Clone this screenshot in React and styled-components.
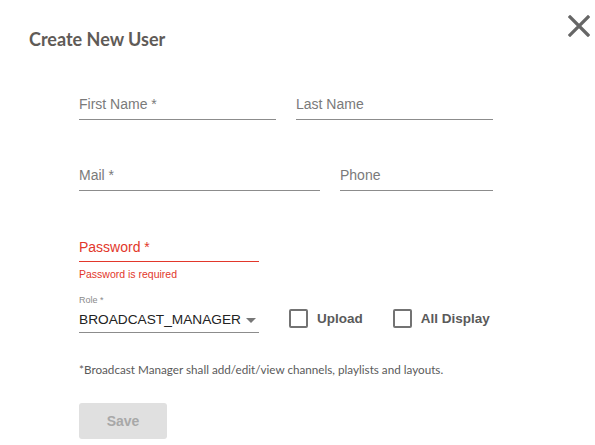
import React, { useState } from "react";
import styled, { createGlobalStyle } from "styled-components";

const GlobalStyle = createGlobalStyle`
  body {
    margin: 0;
    background: #ffffff;
    font-family: "Liberation Sans", Arial, sans-serif;
  }
`;

const Dialog = styled.div`
  width: 595px;
  height: 445px;
  box-sizing: border-box;
  position: relative;
  background: #ffffff;
`;

const Header = styled.div`
  display: flex;
  justify-content: space-between;
  align-items: flex-start;
  padding: 15px 5px 0 29px;
`;

const Title = styled.h2`
  margin: 13px 0 0;
  font-family: "Lato", "Open Sans", sans-serif;
  font-weight: 700;
  font-size: 18px;
  line-height: 22px;
  color: #5f5b57;
`;

const CloseButton = styled.button`
  width: 22px;
  height: 22px;
  padding: 0;
  border: none;
  background: none;
  cursor: pointer;
  display: flex;
`;

const Form = styled.form`
  width: 414px;
  padding: 45px 0 0 79px;
  display: flex;
  flex-direction: column;
`;

const Row = styled.div`
  display: flex;
  gap: 20px;
  align-items: flex-end;
  margin-top: ${(p) => p.$top || 0}px;
`;

const Field = styled.div`
  width: ${(p) => p.$width}px;
  box-sizing: border-box;
  padding-bottom: ${(p) => (p.$error ? 5 : 6)}px;
  border-bottom: 1px solid ${(p) => (p.$error ? "#e2372b" : "#8c8c8c")};
`;

const Input = styled.input`
  width: 100%;
  border: none;
  outline: none;
  padding: 0;
  background: transparent;
  font-family: "Liberation Sans", Arial, sans-serif;
  font-size: 14px;
  line-height: 16px;
  height: 16px;
  color: #333;

  &::placeholder {
    color: ${(p) => (p.$error ? "#e2372b" : "#7a7a7a")};
    opacity: 1;
  }
`;

const ErrorText = styled.div`
  margin-top: 6px;
  font-size: 10.5px;
  line-height: 12px;
  color: #e2372b;
`;

const RoleRow = styled.div`
  display: flex;
  align-items: flex-end;
  margin-top: 15px;
`;

const SelectWrap = styled.div`
  width: 180px;
  display: flex;
  flex-direction: column;
`;

const SmallLabel = styled.label`
  font-size: 9px;
  line-height: 11px;
  color: #8a8a8a;
`;

const Select = styled.div`
  margin-top: 6px;
  display: flex;
  align-items: center;
  justify-content: space-between;
  padding: 0 3px 4px 0;
  border-bottom: 1px solid #8c8c8c;
  font-size: 13.7px;
  line-height: 16px;
  color: #222;
  cursor: pointer;
`;

const Caret = styled.span`
  width: 0;
  height: 0;
  border-left: 5px solid transparent;
  border-right: 5px solid transparent;
  border-top: 5px solid #777;
`;

const Check = styled.label`
  display: flex;
  align-items: center;
  gap: 9px;
  margin-left: ${(p) => p.$left}px;
  margin-bottom: 5px;
  font-size: 13.5px;
  font-weight: 700;
  color: #5a5a5a;
  cursor: pointer;
`;

const Box = styled.span`
  width: 19px;
  height: 19px;
  box-sizing: border-box;
  border: 2px solid #737373;
  border-radius: 2px;
  background: ${(p) => (p.$on ? "#737373" : "#fff")};
`;

const Note = styled.p`
  margin: 29px 0 0;
  font-family: "Lato", "Open Sans", sans-serif;
  font-size: 11.7px;
  line-height: 14px;
  color: #5a5a5a;
`;

const SaveButton = styled.button`
  margin-top: 27px;
  width: 88px;
  height: 36px;
  border: none;
  border-radius: 3px;
  background: #e0e0e0;
  color: #a8a8a8;
  font-family: "Liberation Sans", Arial, sans-serif;
  font-size: 14px;
  font-weight: 700;
`;

const App = () => {
  const [upload, setUpload] = useState(false);
  const [allDisplay, setAllDisplay] = useState(false);

  return (
    <Dialog>
      <GlobalStyle />
      <Header>
        <Title>Create New User</Title>
        <CloseButton aria-label="close">
          <svg width="22" height="22" viewBox="0 0 22 22">
            <path
              d="M2 2 L20 20 M20 2 L2 20"
              stroke="#666"
              strokeWidth="3.2"
              strokeLinecap="square"
            />
          </svg>
        </CloseButton>
      </Header>
      <Form onSubmit={(e) => e.preventDefault()}>
        <Row>
          <Field $width={197}>
            <Input placeholder="First Name *" />
          </Field>
          <Field $width={197}>
            <Input placeholder="Last Name" />
          </Field>
        </Row>
        <Row $top={46}>
          <Field $width={241}>
            <Input placeholder="Mail *" />
          </Field>
          <Field $width={153}>
            <Input placeholder="Phone" />
          </Field>
        </Row>
        <Row $top={47}>
          <Field $width={180} $error>
            <Input type="password" placeholder="Password *" $error />
          </Field>
        </Row>
        <ErrorText>Password is required</ErrorText>
        <RoleRow>
          <SelectWrap>
            <SmallLabel>Role *</SmallLabel>
            <Select>
              BROADCAST_MANAGER
              <Caret />
            </Select>
          </SelectWrap>
          <Check $left={30} onClick={() => setUpload(!upload)}>
            <Box $on={upload} />
            Upload
          </Check>
          <Check $left={30} onClick={() => setAllDisplay(!allDisplay)}>
            <Box $on={allDisplay} />
            All Display
          </Check>
        </RoleRow>
        <Note>
          *Broadcast Manager shall add/edit/view channels, playlists and
          layouts.
        </Note>
        <SaveButton type="submit" disabled>
          Save
        </SaveButton>
      </Form>
    </Dialog>
  );
};

export default App;
